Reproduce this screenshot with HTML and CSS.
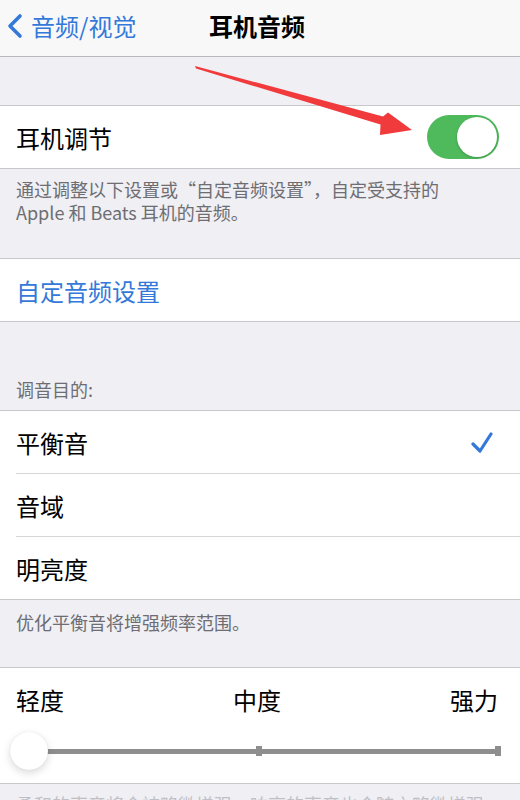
FILE: index.html
```html
<!DOCTYPE html>
<html lang="zh-CN">
<head>
    <meta charset="UTF-8">
    <meta name="viewport" content="width=device-width, initial-scale=1.0">
    <title>耳机音频</title>
    <link rel="stylesheet" href="styles.css">
</head>
<body>
    <div class="nav">
        <a class="nav-back" href="#">
            <svg class="chevron" width="18" height="26" viewBox="0 0 18 26">
                <path d="M15 3 L5 13 L15 23" fill="none" stroke="#3479d9" stroke-width="3.6" stroke-linecap="round" stroke-linejoin="round"/>
            </svg>
            <span>音频/视觉</span>
        </a>
        <div class="nav-title">耳机音频</div>
        <div></div>
    </div>

    <div class="spacer"></div>

    <div class="group">
        <div class="cell">
            <span>耳机调节</span>
            <div class="switch on"><div class="switch-knob"></div></div>
        </div>
    </div>
    <p class="footer">通过调整以下设置或“自定音频设置”，自定受支持的<br>Apple 和 Beats 耳机的音频。</p>

    <div class="group">
        <div class="cell link">自定音频设置</div>
    </div>

    <p class="header">调音目的:</p>
    <div class="group list">
        <div class="cell">
            <span>平衡音</span>
            <svg class="check" width="24" height="22" viewBox="0 0 24 22">
                <path d="M3 13 L10 20 L21 3" fill="none" stroke="#3479d9" stroke-width="3.2" stroke-linecap="round" stroke-linejoin="round"/>
            </svg>
        </div>
        <div class="cell">音域</div>
        <div class="cell">明亮度</div>
    </div>
    <p class="footer short">优化平衡音将增强频率范围。</p>

    <div class="group">
        <div class="level">
            <div class="level-labels">
                <span>轻度</span>
                <span>中度</span>
                <span>强力</span>
            </div>
            <div class="slider">
                <div class="track">
                    <i class="tick"></i>
                    <i class="tick"></i>
                    <i class="tick"></i>
                </div>
                <div class="slider-knob"></div>
            </div>
        </div>
    </div>
    <p class="footer faint">柔和的声音将会被略微增强，响亮的声音也会随之略微增强一些。</p>

    <!-- red annotation arrow pointing at the switch -->
    <svg class="annotation" width="520" height="800" viewBox="0 0 520 800">
        <polygon points="195,66 383,116.5 388,112.5 412,130 380,135 380.5,124.5 196,68.5" fill="#f03a3c"/>
    </svg>
</body>
</html>
```

FILE: styles.css
```css
body {
    margin: 0;
    width: 520px;
    height: 800px;
    overflow: hidden;
    background-color: #efeff4;
    color: #000;
    font-family: "Noto Sans CJK SC", "Noto Sans", sans-serif;
    position: relative;
}

/* top bar */
.nav {
    height: 57px;
    background-color: #f8f8f9;
    border-bottom: 1px solid #b8b8bc;
    display: grid;
    grid-template-columns: 1fr auto 1fr;
    align-items: center;
    padding-bottom: 5px;
    box-sizing: border-box;
}

.nav-back {
    display: flex;
    align-items: center;
    gap: 8px;
    padding-left: 5px;
    color: #3479d9;
    text-decoration: none;
    font-size: 24px;
    line-height: 30px;
}

.nav-title {
    font-size: 24px;
    font-weight: 700;
    line-height: 30px;
    padding-right: 6px;
}

.spacer {
    height: 48px;
}

/* grouped table */
.group {
    background-color: #fff;
    border-top: 1px solid #c8c7cc;
    border-bottom: 1px solid #c8c7cc;
}

.cell {
    height: 62px;
    padding: 0 21px 0 16px;
    display: flex;
    align-items: center;
    justify-content: space-between;
    font-size: 24px;
}

.list {
    padding-left: 16px;
}

.list .cell {
    padding-left: 0;
    padding-right: 26px;
}

.list .cell + .cell {
    border-top: 1px solid #d6d6da;
}

.link {
    color: #3479d9;
}

.check {
    display: block;
}

.header,
.footer {
    margin: 0;
    padding: 9px 16px 34px;
    font-size: 18px;
    line-height: 23px;
    color: #6d6d72;
}

.header {
    padding: 56px 16px 9px;
}

.footer.short {
    padding: 11px 16px 33px;
}

.footer.faint {
    color: #c0c0c4;
}

/* switch */
.switch {
    width: 72px;
    height: 44px;
    border-radius: 22px;
    background-color: #4fba5c;
    display: flex;
    align-items: center;
    justify-content: flex-end;
    padding: 0 2px;
    box-sizing: border-box;
}

.switch-knob {
    width: 40px;
    height: 40px;
    border-radius: 50%;
    background-color: #fff;
    box-shadow: 0 1px 3px rgba(0, 0, 0, 0.2);
}

/* intensity slider */
.level {
    height: 115px;
    padding-top: 17px;
    box-sizing: border-box;
}

.level-labels {
    display: flex;
    justify-content: space-between;
    padding: 0 22px 0 16px;
    font-size: 24px;
    line-height: 30px;
}

.slider {
    position: relative;
    height: 40px;
    margin: 16px 19px 0 16px;
    display: flex;
    align-items: center;
}

.track {
    flex: 1;
    height: 10px;
    display: flex;
    justify-content: space-between;
    align-items: center;
    background: linear-gradient(#8e8e8e, #8e8e8e) center / 100% 5px no-repeat;
}

.tick {
    width: 6px;
    height: 10px;
    background-color: #8e8e8e;
}

.slider-knob {
    position: absolute;
    left: -6px;
    top: 1px;
    width: 38px;
    height: 38px;
    border-radius: 50%;
    background-color: #fff;
    box-shadow: 0 3px 8px rgba(0, 0, 0, 0.15), 0 0 1px rgba(0, 0, 0, 0.12);
}

.annotation {
    position: absolute;
    top: 0;
    left: 0;
    pointer-events: none;
}
```
